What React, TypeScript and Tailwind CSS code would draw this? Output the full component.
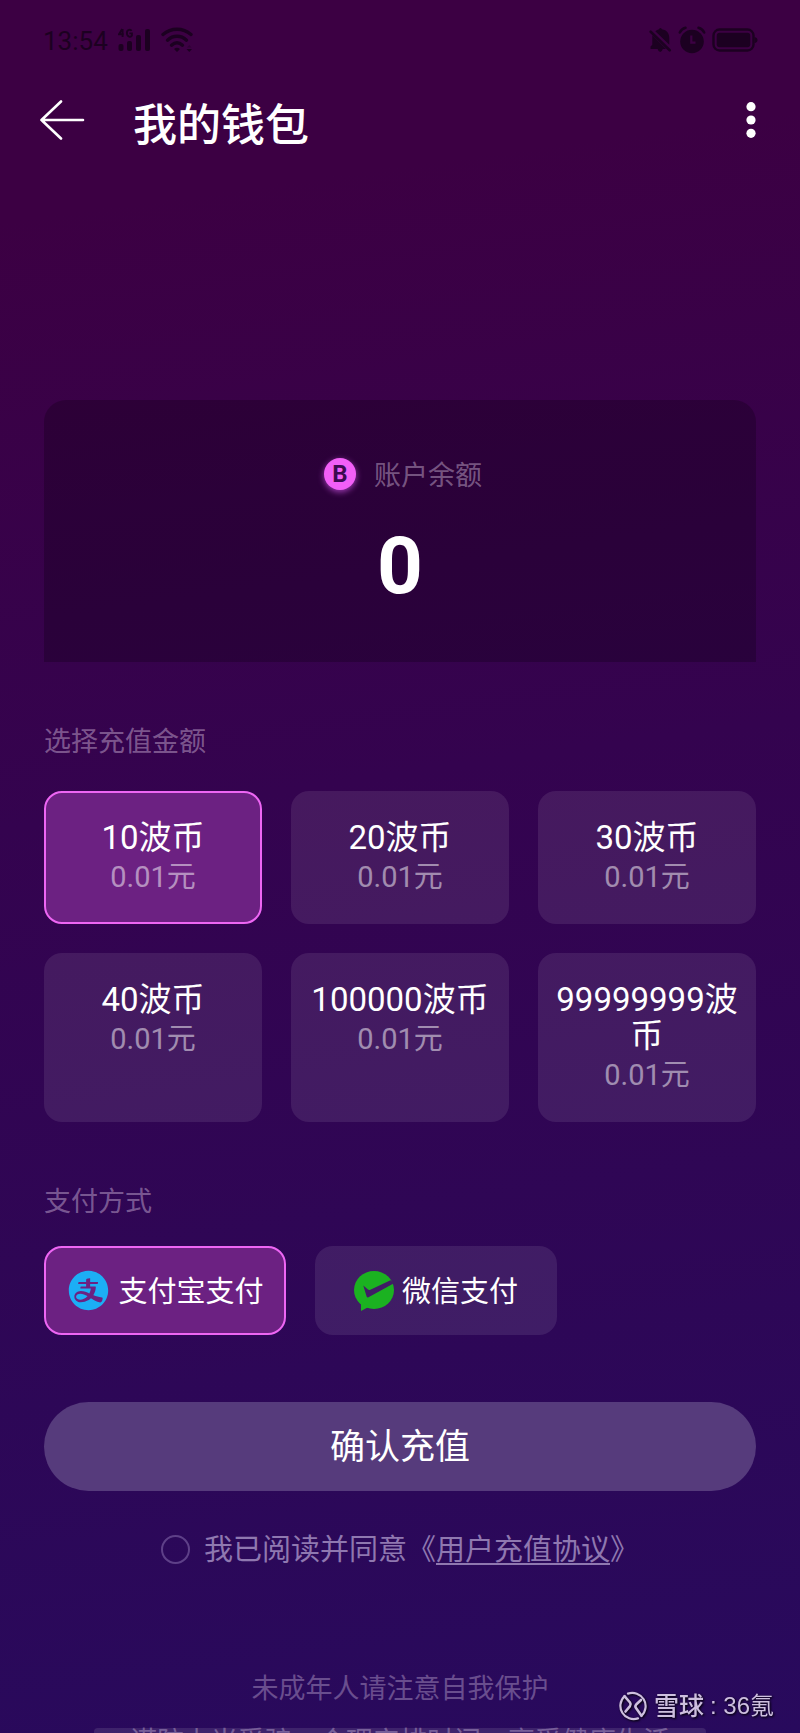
import { useState } from "react";
import { AiFillAlipayCircle } from "react-icons/ai";

const amounts = [
  { coins: "10波币", price: "0.01元" },
  { coins: "20波币", price: "0.01元" },
  { coins: "30波币", price: "0.01元" },
  { coins: "40波币", price: "0.01元" },
  { coins: "100000波币", price: "0.01元" },
  { coins: "99999999波币", price: "0.01元" },
];

const selectedStyle = "border-[#ee66f4] bg-[#6c2182]";
const idleStyle = "border-transparent bg-white/9 bg-clip-border";

function SignalIcon() {
  return (
    <svg width="33" height="24" viewBox="0 0 33 24" fill="currentColor" aria-hidden="true">
      <path d="M4.200 1 1 6.300h4.800M4.600 1v8" fill="none" stroke="currentColor" strokeWidth="1.900" />
      <path d="M13.500 2.800C12.800 1.200 8.900 1 8.900 5s4 4.600 5 2.500V5.400h-2.500" fill="none" stroke="currentColor" strokeWidth="1.900" />
      <rect x="0.500" y="16" width="5" height="7" rx="2" />
      <rect x="9" y="13" width="5" height="10" rx="2" />
      <rect x="18" y="7" width="5" height="16" rx="2" />
      <rect x="27" y="1" width="5" height="22" rx="2" />
    </svg>
  );
}

function WifiIcon() {
  return (
    <svg width="32" height="26" viewBox="0 0 32 26" fill="none" stroke="currentColor" aria-hidden="true">
      <path d="M2 7.500C10 0.500 22 0.500 30 7.500" strokeWidth="3.400" strokeLinecap="round" />
      <path d="M6.500 13.200C12 8 20 8 25.500 13.200" strokeWidth="3.400" strokeLinecap="round" />
      <path d="M10.500 18.200C14 15 18 15 21.500 18.200" strokeWidth="3.400" strokeLinecap="round" />
      <path d="M13 22q3-2.400 6 0l-3 3zM25.500 22h5.500l-2.700 3z" fill="currentColor" stroke="none" />
      <path d="M26 20.500h4.500L28.300 18z" fill="currentColor" stroke="none" opacity="0.4" />
    </svg>
  );
}

function BellOffIcon() {
  return (
    <svg width="23" height="26" viewBox="0 0 23 26" fill="currentColor" aria-hidden="true">
      <path d="M6.300 4.200Q8 2.500 10 2.200 11.300 0 13 2.200C18 3 20.300 6.500 20.300 11v6.800z" />
      <path d="M3.300 8.200 17 22h-3.200q-.8 3-2.600 3T8.600 22H1.500v-2.500l1.800-1.800z" />
      <path d="m1.700 4.700 19 18.600" stroke="currentColor" strokeWidth="2.600" strokeLinecap="round" />
    </svg>
  );
}

function AlarmIcon() {
  return (
    <svg width="28" height="28" viewBox="0 0 28 28" aria-hidden="true">
      <circle cx="14" cy="15.500" r="11.800" fill="currentColor" />
      <path d="M1.800 6.500Q3.500 3 7.500 1.800M26.200 6.500Q24.500 3 20.500 1.800" fill="none" stroke="currentColor" strokeWidth="2.600" strokeLinecap="round" />
      <path d="M13.300 9.500v7.200h4.200" fill="none" stroke="#3c0043" strokeWidth="2.200" />
    </svg>
  );
}

function BatteryIcon() {
  return (
    <svg width="46" height="24" viewBox="0 0 46 24" aria-hidden="true">
      <rect x="1.500" y="1.500" width="40" height="21" rx="6" fill="none" stroke="currentColor" strokeWidth="2.400" />
      <rect x="4.700" y="4.700" width="33.600" height="14.600" rx="3" fill="currentColor" />
      <path d="M42.500 9q3 .5 3 3t-3 3z" fill="currentColor" />
    </svg>
  );
}

function WechatPayIcon() {
  return (
    <svg width="40" height="40" viewBox="0 0 40 40" aria-hidden="true">
      <mask id="wechat-check">
        <rect width="40" height="40" fill="white" />
        <path d="M9.300 14.600 14 18.600q1 .7 2.300.1L36.500 9.200 40 12.300 14.500 26.300q-1.300.6-1.900-.7z" fill="black" />
      </mask>
      <g fill="#1bb221" mask="url(#wechat-check)">
        <ellipse cx="20" cy="19" rx="20" ry="19" />
        <path d="M7 30v10l8.500-4.500z" />
      </g>
    </svg>
  );
}

function XueqiuLogo() {
  return (
    <svg width="30" height="30" viewBox="0 0 30 30" fill="none" stroke="currentColor" strokeLinecap="round" strokeLinejoin="round" aria-hidden="true">
      <path d="M10 2.600A13.300 13.300 0 0 1 23.500 24.800M20 27.400A13.300 13.300 0 0 1 6.500 5.200" strokeWidth="2.200" />
      <path d="M6.500 5.200 12 11.500q1.300 1.800 0 3.600L7.500 20.500M23 9 18.200 13.500q-1.500 1.700-.2 3.600L23.500 24.800" strokeWidth="2.600" />
    </svg>
  );
}

export default function App() {
  const [amount, setAmount] = useState(0);
  const [method, setMethod] = useState("alipay");
  const [agreed, setAgreed] = useState(false);

  return (
    <div className="relative flex h-dvh flex-col overflow-hidden bg-linear-[172deg,#3c0043_12%,#34034f_45%,#280a5d_100%] font-['Roboto','Noto_Sans_CJK_SC',sans-serif] text-white">
      <div className="flex h-20 shrink-0 items-center justify-between pr-[42px] pl-[43px] text-[#1c0021]">
        <div className="flex items-center gap-2.5">
          <span className="pt-0.5 text-[26px] leading-8">13:54</span>
          <SignalIcon />
          <WifiIcon />
        </div>
        <div className="flex items-center gap-1.5">
          <BellOffIcon />
          <AlarmIcon />
          <BatteryIcon />
        </div>
      </div>

      <header className="flex h-20 shrink-0 items-center pr-11 pl-10">
        <button type="button" aria-label="返回">
          <svg width="45" height="40" viewBox="0 0 45 40" fill="none" stroke="currentColor" strokeWidth="2.600" strokeLinecap="round" strokeLinejoin="round" aria-hidden="true">
            <path d="M21 1.500 1.500 20 21 38.500M1.500 20H43" />
          </svg>
        </button>
        <h1 className="mt-3 ml-12 text-[44px] leading-[60px] font-medium">我的钱包</h1>
        <button type="button" aria-label="更多" className="ml-auto">
          <svg width="10" height="40" viewBox="0 0 10 40" fill="currentColor" aria-hidden="true">
            <circle cx="5" cy="6.700" r="4.600" />
            <circle cx="5" cy="20" r="4.600" />
            <circle cx="5" cy="33.300" r="4.600" />
          </svg>
        </button>
      </header>

      <main className="flex flex-col px-11 pt-60">
        <section className="flex h-[262px] flex-col items-center rounded-t-[22px] bg-black/22 pt-14">
          <div className="flex items-center gap-[18px] pl-1.5">
            <span className="flex size-8 items-center justify-center rounded-full bg-[#f25ff7] text-2xl leading-8 font-bold text-[#3c0a50] shadow-[0_2px_6px_#a03cb4]">
              B
            </span>
            <span className="pt-1 text-[27px] leading-8 text-[#f0dcf5]/40">账户余额</span>
          </div>
          <strong className="mt-6 text-[80px] leading-[100px] font-bold">0</strong>
        </section>

        <h2 className="mt-[62px] text-[27px] leading-9 text-[#f0dcf5]/40">选择充值金额</h2>
        <div className="mt-[31px] grid grid-cols-3 gap-[29px]">
          {amounts.map((item, index) => (
            <button
              key={item.coins}
              type="button"
              aria-pressed={amount === index}
              onClick={() => setAmount(index)}
              className={`flex flex-col items-center gap-[3px] rounded-[18px] border-2 px-3 pt-[27px] pb-[27px] leading-9 ${amount === index ? selectedStyle : idleStyle}`}
            >
              <span className="text-[33px] break-all">{item.coins}</span>
              <span className="text-[29px] text-white/50">{item.price}</span>
            </button>
          ))}
        </div>

        <h2 className="mt-[62px] text-[27px] leading-9 text-[#f0dcf5]/40">支付方式</h2>
        <div className="mt-[26px] flex gap-[29px]">
          <button
            type="button"
            aria-pressed={method === "alipay"}
            onClick={() => setMethod("alipay")}
            className={`flex h-[89px] w-[242px] items-center justify-center gap-[7px] rounded-[18px] border-2 text-[29px] ${method === "alipay" ? selectedStyle : idleStyle}`}
          >
            <AiFillAlipayCircle className="size-[45px] text-[#1caef5]" aria-hidden="true" />
            <span className="pt-1">支付宝支付</span>
          </button>
          <button
            type="button"
            aria-pressed={method === "wechat"}
            onClick={() => setMethod("wechat")}
            className={`flex h-[89px] w-[242px] items-center justify-center gap-2 rounded-[18px] border-2 text-[29px] ${method === "wechat" ? selectedStyle : idleStyle}`}
          >
            <WechatPayIcon />
            <span className="pt-1">微信支付</span>
          </button>
        </div>

        <button type="button" className="mt-[67px] h-[89px] rounded-full bg-[#563b7c] pt-1 text-[35px]">
          确认充值
        </button>

        <div className="mt-[39px] flex items-center justify-center gap-3.5 text-[29px] leading-9 text-[#8f78b0]">
          <input
            id="agreement"
            type="checkbox"
            checked={agreed}
            onChange={(event) => setAgreed(event.target.checked)}
            className="size-[29px] appearance-none rounded-full border-2 border-[#5e4088] checked:bg-[#ee66f4]"
          />
          <label htmlFor="agreement" className="pt-0.5">
            我已阅读并同意《
            <a href="#terms" className="underline decoration-2 underline-offset-3">用户充值协议</a>》
          </label>
        </div>
      </main>

      <footer className="mt-[103px] flex shrink-0 flex-col items-center text-[27px] text-[#e6d2f0]/35">
        <p className="leading-9">未成年人请注意自我保护</p>
        <p className="mt-[21px] rounded-t-sm bg-white/10 px-9 leading-7">谨防上当受骗，合理安排时间，享受健康生活</p>
      </footer>

      <div className="absolute right-[26px] bottom-2.5 flex items-center gap-1.5 font-['Liberation_Sans','Noto_Sans_CJK_SC',sans-serif] text-2xl text-[#cdbfdf] drop-shadow-[1px_1px_1px_#000]">
        <XueqiuLogo />
        <span className="text-[25px] font-medium">雪球</span>
        <span>: 36氪</span>
      </div>
    </div>
  );
}
